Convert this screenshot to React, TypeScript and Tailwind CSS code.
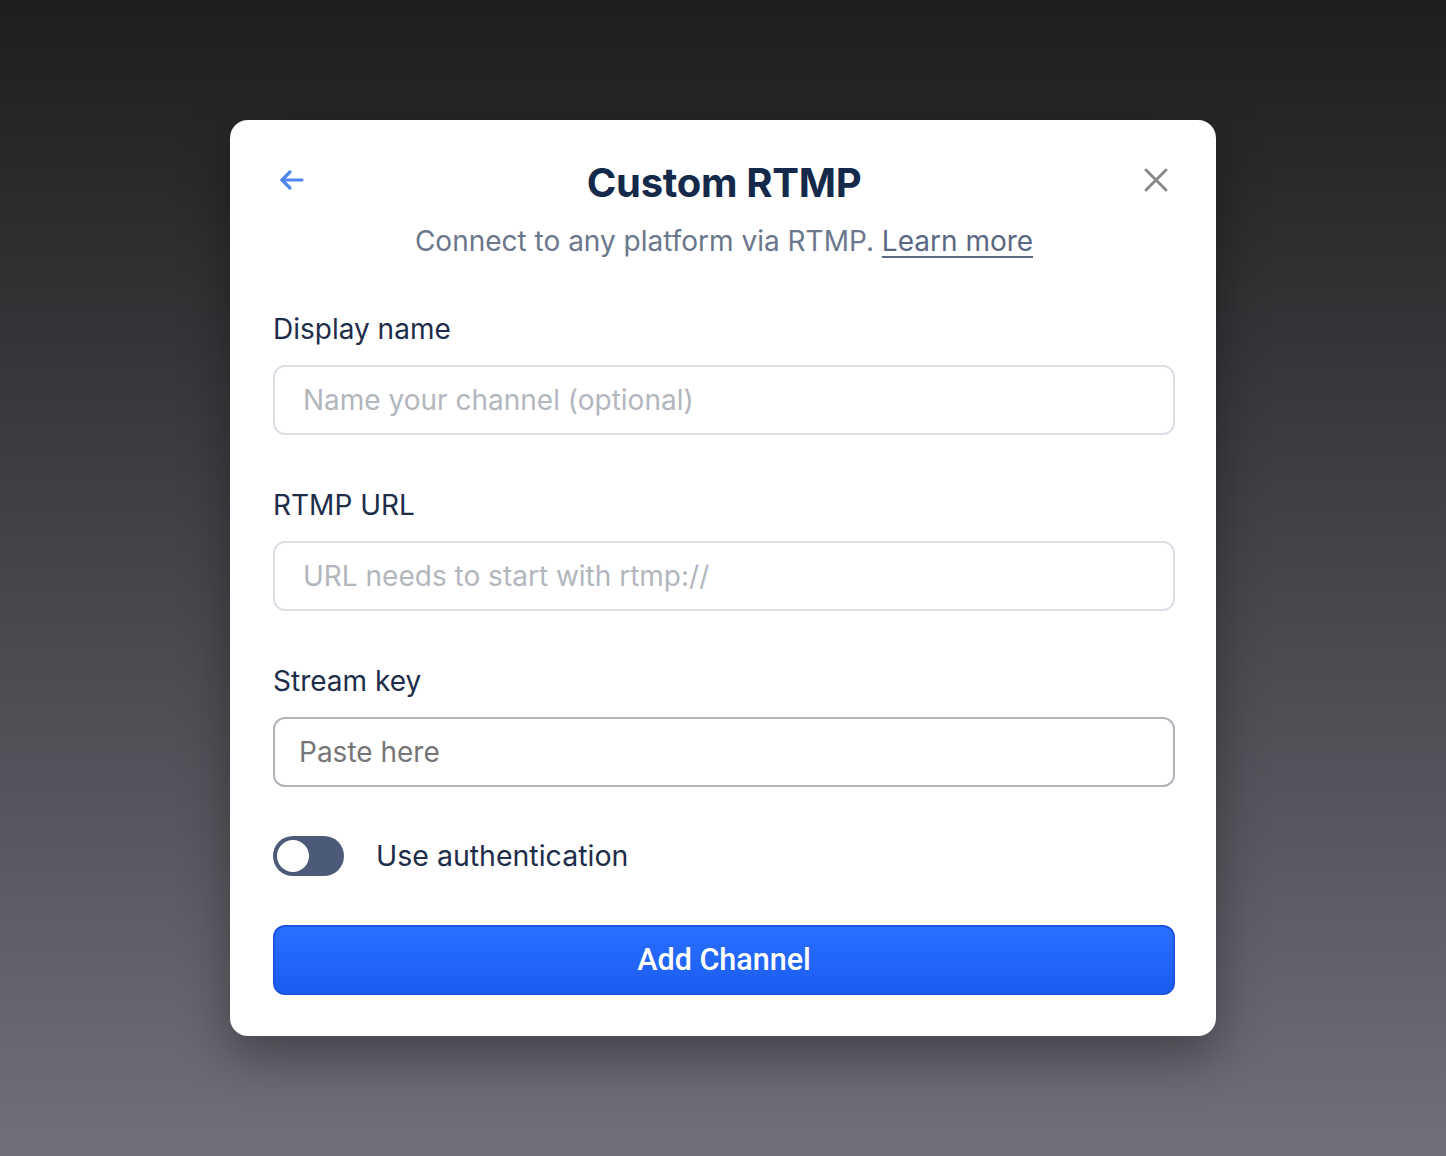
import { FC } from 'react';

const fieldClass =
  "w-full h-[70px] rounded-xl border-2 bg-white text-[28px] text-[#1e2d4a] outline-none";

const App: FC = () => {
  return (
    <div
      className="min-h-[1156px] w-full flex items-start justify-center pt-[120px] bg-gradient-to-b from-[#1e1e1e] via-[#45464b] to-[#6f7079]"
      style={{ fontFamily: 'Inter, "Noto Sans", sans-serif' }}
    >
      <div className="w-[986px] rounded-[18px] bg-white pl-[43px] pr-[41px] pt-[40px] pb-[41px] shadow-[0_20px_50px_rgba(0,0,0,0.35)]">
        {/* header */}
        <div className="flex items-center justify-between h-[46px]">
          <button className="w-[40px] h-[40px] mb-[6px] flex items-center justify-start pl-[6px] text-[#4f86f2]">
            <svg width="26" height="22" viewBox="0 0 26 22" fill="none" stroke="currentColor" strokeWidth="3.2" strokeLinecap="round" strokeLinejoin="round">
              <path d="M23 11H3" />
              <path d="M11 3L3 11l8 8" />
            </svg>
          </button>
          <h1 className="text-[40px] font-bold tracking-[-0.3px] text-[#15294b]">Custom RTMP</h1>
          <button className="w-[40px] h-[40px] mb-[6px] flex items-center justify-end pr-[6px] text-[#8a8a8a]">
            <svg width="26" height="26" viewBox="0 0 26 26" fill="none" stroke="currentColor" strokeWidth="3" strokeLinecap="round">
              <path d="M3 3l20 20M23 3L3 23" />
            </svg>
          </button>
        </div>
        <p className="mt-[16px] text-center text-[28px] text-[#6b778c] leading-[38px]">
          Connect to any platform via RTMP.{' '}
          <a className="underline underline-offset-[5px] decoration-[1.5px] text-[#5b6883]">Learn more</a>
        </p>

        {/* fields */}
        <div className="mt-[50px] flex flex-col">
          <label className="text-[28px] leading-[38px] text-[#1e2d4a]">Display name</label>
          <input className={`${fieldClass} mt-[17px] px-[28px] border-[#dcdfe6] placeholder:text-[#b2b6bd]`} placeholder="Name your channel (optional)" />

          <label className="mt-[51px] text-[28px] leading-[38px] text-[#1e2d4a]">RTMP URL</label>
          <input className={`${fieldClass} mt-[17px] px-[28px] border-[#dcdfe6] placeholder:text-[#b2b6bd]`} placeholder="URL needs to start with rtmp://" />

          <label className="mt-[51px] text-[28px] leading-[38px] text-[#1e2d4a]">Stream key</label>
          <input className={`${fieldClass} mt-[17px] px-[24px] border-[#b0b4ba] placeholder:text-[#767676]`} placeholder="Paste here" />
        </div>

        {/* toggle */}
        <div className="mt-[49px] h-[40px] flex items-center gap-[32px]">
          <div className="w-[71px] h-[40px] rounded-full bg-[#4b5a78] p-[4px] flex items-center">
            <div className="w-[32px] h-[32px] rounded-full bg-white" />
          </div>
          <span className="text-[28.5px] leading-[40px] text-[#1e2d4a]">Use authentication</span>
        </div>

        {/* submit */}
        <button
          className="mt-[49px] w-full h-[70px] rounded-xl border-2 border-[#1a56e0] bg-gradient-to-b from-[#2a6fff] to-[#1a5cf0] text-white text-[30.5px] font-medium"
          style={{ fontFamily: 'Roboto, "Liberation Sans", sans-serif' }}
        >
          Add Channel
        </button>
      </div>
    </div>
  );
};

export default App;
